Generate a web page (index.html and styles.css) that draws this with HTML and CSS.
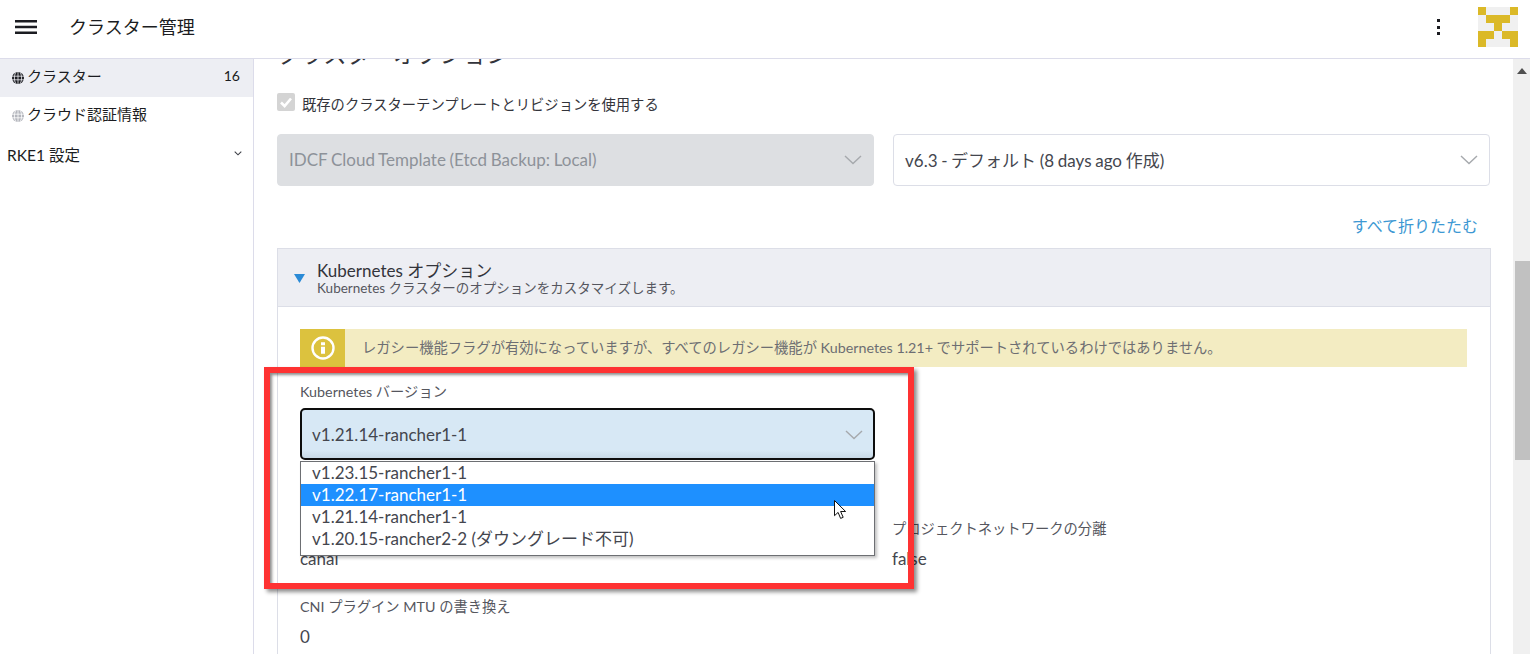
FILE: index.html
```html
<!DOCTYPE html>
<html lang="ja">
<head>
<meta charset="utf-8">
<title>クラスター管理</title>
<link rel="stylesheet" href="styles.css">
</head>
<body>
<header class="topbar">
  <svg class="burger" viewBox="0 0 22 14" width="22" height="14"><path d="M0 1.2h22M0 7h22M0 12.8h22" stroke="#1b1c21" stroke-width="2.4"/></svg>
  <div class="app-title">クラスター管理</div>
  <div class="kebab"><i></i><i></i><i></i></div>
  <svg class="avatar" viewBox="0 0 5 5" width="40" height="40" shape-rendering="crispEdges">
    <rect width="5" height="5" fill="#f0f0f0"/>
    <path fill="#dbb928" d="M0 0h1v1H0zM4 0h1v1H4zM1 1h3v1H1zM2 2h1v1H2zM0 3h2v1H1v1H0zM3 3h2v2H4V4H3z"/>
  </svg>
</header>
<div class="shell">
  <nav class="sidebar">
    <a class="nav-item active"><svg class="globe" viewBox="0 0 12 12" width="12" height="12"><circle cx="6" cy="6" r="6" fill="#1b1c21"/><path d="M0 4.2h12M0 7.8h12M6 0v12M3.6 .6c-1.6 3-1.6 7.8 0 10.8M8.4 .6c1.6 3 1.6 7.8 0 10.8" stroke="#edeef3" stroke-width=".8" fill="none"/></svg><span class="nav-label">クラスター</span><span class="count">16</span></a>
    <a class="nav-item"><svg class="globe" viewBox="0 0 12 12" width="12" height="12"><circle cx="6" cy="6" r="6" fill="#b4b6bd"/><path d="M0 4.2h12M0 7.8h12M6 0v12M3.6 .6c-1.6 3-1.6 7.8 0 10.8M8.4 .6c1.6 3 1.6 7.8 0 10.8" stroke="#fff" stroke-width=".8" fill="none"/></svg><span class="nav-label">クラウド認証情報</span></a>
    <a class="nav-group"><span>RKE1 設定</span><svg viewBox="0 0 8 5" width="8" height="5"><path d="M.7.7 4 3.8 7.3.7" fill="none" stroke="#3d3f47" stroke-width="1.1"/></svg></a>
  </nav>
  <main class="content">
    <h2 class="section-title">クラスターオプション</h2>
    <label class="check-row">
      <span class="check"><svg viewBox="0 0 18 18" width="18" height="18"><path d="M4 9.5 7.6 13 14 5.5" fill="none" stroke="#fff" stroke-width="2.6"/></svg></span>
      <span>既存のクラスターテンプレートとリビジョンを使用する</span>
    </label>
    <div class="select-row">
      <div class="select disabled"><span>IDCF Cloud Template (Etcd Backup: Local)</span><svg class="chev" viewBox="0 0 18 10" width="18" height="10"><path d="M1 1l8 7.6L17 1" fill="none" stroke="#a6a9ad" stroke-width="1.4"/></svg></div>
      <div class="select"><span>v6.3 - デフォルト (8 days ago 作成)</span><svg class="chev" viewBox="0 0 18 10" width="18" height="10"><path d="M1 1l8 7.6L17 1" fill="none" stroke="#a6a9ad" stroke-width="1.4"/></svg></div>
    </div>
    <div class="collapse-row"><a>すべて折りたたむ</a></div>
    <section class="accordion">
      <div class="acc-head">
        <svg class="tri" viewBox="0 0 11 9" width="11" height="9"><path d="M0 0h11L5.5 9z" fill="#2a8ad6"/></svg>
        <div class="acc-text">
          <div class="acc-title">Kubernetes オプション</div>
          <div class="acc-sub">Kubernetes クラスターのオプションをカスタマイズします。</div>
        </div>
      </div>
      <div class="acc-body">
        <div class="banner">
          <div class="banner-icon"><svg viewBox="0 0 24 24" width="24" height="24"><circle cx="12" cy="12" r="10.5" fill="none" stroke="#fff" stroke-width="2.4"/><path d="M10 6.2h4v3h-4zM10 10.8h4v7h-4z" fill="#fff"/></svg></div>
          <div class="banner-text">レガシー機能フラグが有効になっていますが、すべてのレガシー機能が Kubernetes 1.21+ でサポートされているわけではありません。</div>
        </div>
        <div class="field-label version-label">Kubernetes バージョン</div>
        <div class="select focused"><span>v1.21.14-rancher1-1</span><svg class="chev" viewBox="0 0 18 10" width="18" height="10"><path d="M1 1l8 7.6L17 1" fill="none" stroke="#a6a9ad" stroke-width="1.4"/></svg></div>
        <div class="field-grid first">
          <div class="field"><div class="field-label">ネットワークプロバイダー</div><div class="field-value">canal</div></div>
          <div class="field"><div class="field-label">プロジェクトネットワークの分離</div><div class="field-value">false</div></div>
        </div>
        <div class="field-grid">
          <div class="field"><div class="field-label">CNI プラグイン MTU の書き換え</div><div class="field-value">0</div></div>
        </div>
      </div>
    </section>
  </main>
  <div class="scrollbar">
    <svg class="arrow" viewBox="0 0 10 6" width="10" height="6"><path d="M0 6 5 0l5 6z" fill="#505050"/></svg>
    <div class="thumb"></div>
  </div>
</div>
<div class="dropdown">
  <div class="opt">v1.23.15-rancher1-1</div>
  <div class="opt selected">v1.22.17-rancher1-1</div>
  <div class="opt">v1.21.14-rancher1-1</div>
  <div class="opt">v1.20.15-rancher2-2 (ダウングレード不可)</div>
</div>
<svg class="cursor" viewBox="0 0 13 20" width="13" height="20"><path d="M.5.5v15.2l3.6-3.3 2.5 6 2.6-1.1-2.6-5.8h5z" fill="#fff" stroke="#111" stroke-width="1"/></svg>
<div class="callout"></div>
</body>
</html>
```
FILE: styles.css
```css
* { box-sizing: border-box; }
html, body { margin: 0; height: 654px; overflow: hidden; }
body {
  font-family: Lato, "Noto Sans CJK JP", sans-serif;
  color: #33343b;
  background: #fff;
  position: relative;
}
.topbar {
  height: 59px;
  display: flex;
  align-items: center;
  padding: 0 12px 4px 15px;
  border-bottom: 1px solid #dcdcea;
}
.burger { flex: none; }
.app-title { margin-left: 32px; font-size: 18px; color: #1b1c21; flex: 1; margin-top: -2px; }
.kebab { display: flex; flex-direction: column; gap: 3.4px; margin-right: 38px; }
.kebab i { width: 3px; height: 3px; background: #1b1c21; display: block; }
.avatar { flex: none; }
.shell { display: flex; height: 595px; }
.sidebar { width: 254px; flex: none; border-right: 1px solid #dcdcea; font-size: 15px; color: #1b1c21; }
.nav-item { display: flex; align-items: center; height: 38px; padding: 0 13px 5px 12px; }
.nav-item.active { background: #edeef3; }
.nav-item .globe { margin-top: 5px; }
.nav-label { margin-left: 3px; flex: 1; }
.count { font-size: 14px; }
.nav-group { display: flex; align-items: center; justify-content: space-between; padding: 0 11px 7px 7px; height: 40px; margin-top: 2px; font-size: 15.5px; }
.nav-group svg { margin-top: -1px; }
.content { flex: 1; min-width: 0; padding: 0 23px; overflow: hidden; }
.section-title { margin: -19px 0 0; font-size: 23.3px; line-height: 28px; font-weight: 400; color: #33343b; }
.check-row { display: flex; align-items: center; gap: 7px; margin-top: 25px; font-size: 14.3px; height: 20px; color: #33343b; }
.check { width: 18px; height: 18px; background: #d4d4d4; border-radius: 2px; display: block; margin-top: -3px; }
.check svg { display: block; }
.select-row { display: grid; grid-template-columns: 597px 597px; gap: 19px; margin-top: 21px; }
.select {
  height: 52px;
  border: 1px solid #dcdee7;
  border-radius: 4px;
  display: flex;
  align-items: center;
  justify-content: space-between;
  padding: 0 11px 2px 11px;
  font-size: 17px;
  word-spacing: -.7px;
  color: #44464e;
  background: #fff;
}
.select .chev { margin-top: 2px; }
.select.disabled { background: #dddfe2; color: #8d9299; border-color: #dddfe2; }
.select.focused {
  width: 575px;
  height: 52px;
  background: linear-gradient(#d7e8f5 0, #d7e8f5 84%, #c8d9e6 100%);
  border: 2px solid #0d0d0d;
  border-radius: 5px;
  padding: 0 10px;
}
.collapse-row { text-align: right; margin-top: 29px; padding-right: 12px; height: 21px; line-height: 21px; font-size: 16px; color: #3d98d3; }
.accordion { margin-top: 12px; width: 1214px; border: 1px solid #dcdee7; height: 500px; }
.acc-head { height: 58px; background: #edeef3; border-bottom: 1px solid #dcdee7; display: flex; align-items: center; padding-left: 16px; }
.tri { flex: none; margin-top: 2px; }
.acc-text { margin-left: 12px; }
.acc-title { font-size: 17px; line-height: 19px; color: #33343b; margin-top: 2px; }
.acc-sub { font-size: 13.5px; line-height: 16px; color: #55565e; }
.acc-body { padding: 22px 23px 0 22px; }
.banner { display: flex; height: 38px; background: #f3ecc2; }
.banner-icon { width: 45px; flex: none; background: #dcc23e; display: flex; align-items: center; justify-content: center; }
.banner-text { padding-left: 17px; font-size: 14.3px; line-height: 38px; color: #6d6e72; white-space: nowrap; }
.field-label { font-size: 14.3px; line-height: 18px; color: #55565e; }
.version-label { margin-top: 16px; margin-bottom: 7px; }
.field-grid { display: grid; grid-template-columns: 592px 1fr; }
.field-grid.first { margin-top: 60px; }
.field-grid + .field-grid { margin-top: 29px; }
.field-value { font-size: 17px; line-height: 20px; margin-top: 11px; color: #44464e; }
.scrollbar { width: 17px; flex: none; margin-left: auto; background: #f0f0f0; display: flex; flex-direction: column; align-items: center; }
.arrow { margin-top: 9px; }
.thumb { width: 15px; height: 199px; margin-top: 187px; background: #c1c1c1; align-self: flex-end; }
.dropdown {
  position: absolute;
  left: 300px;
  top: 461px;
  width: 575px;
  height: 95px;
  background: #fff;
  border: 1px solid #6d6f73;
  box-shadow: 2px 2px 3px rgba(0,0,0,.25);
  font-size: 17px;
  color: #44464e;
}
.opt { height: 22px; line-height: 22px; padding-left: 11px; }
.opt.selected { background: #1e90ff; color: #fff; }
.cursor { position: absolute; left: 834px; top: 500px; }
.callout {
  position: absolute;
  left: 264px;
  top: 367px;
  width: 650px;
  height: 222px;
  border: 6px solid #fe3232;
  box-shadow: 3px 3px 4px rgba(0,0,0,.45), inset 3px 3px 3px -1px rgba(0,0,0,.45);
}
```
